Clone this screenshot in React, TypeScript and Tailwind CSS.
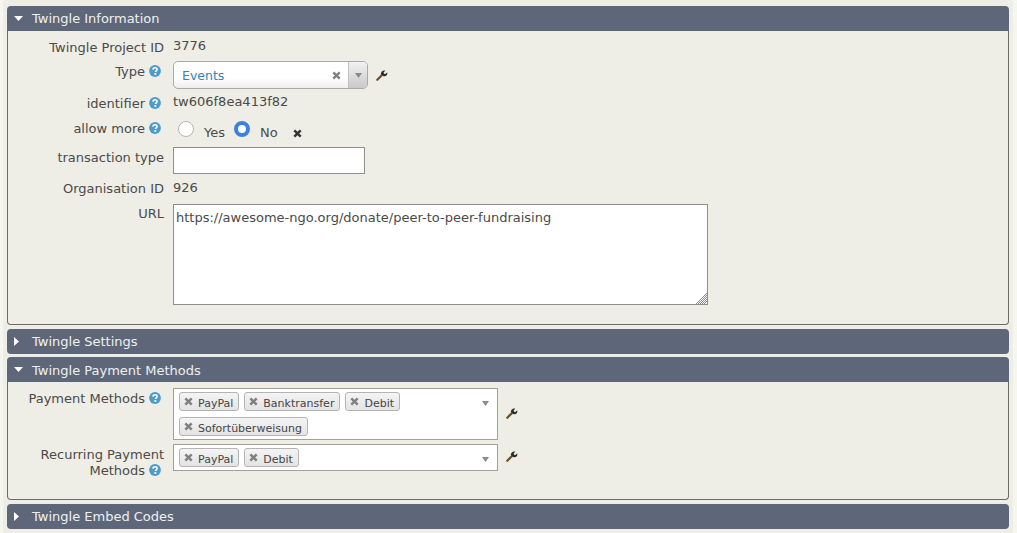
import React from "react";

const Help = () => (
  <svg width="12" height="12" viewBox="0 0 12 12" className="inline-block ml-[4px] mr-[3px] align-[-1px]">
    <circle cx="6" cy="6" r="5.9" fill="#4d9bcb" />
    <path d="M3.9 4.6C4 3.3 4.9 2.7 6 2.7c1.2 0 2.1.7 2.1 1.7 0 1.4-1.7 1.4-1.7 2.7" fill="none" stroke="#fff" strokeWidth="1.6" />
    <rect x="5.4" y="8" width="1.9" height="1.8" fill="#fff" />
  </svg>
);

const Wrench = () => (
  <svg width="12" height="12" viewBox="0 0 12 12" className="block">
    <path d="M1.3 10.7 L5.8 6.2" stroke="#6b5320" strokeWidth="2.3" strokeLinecap="round" />
    <path d="M4.8 5C4.8 2.6 7 .9 9.4 1.6L7.6 3.5l.5 1.2 1.3.4 1.9-1.8C11.8 6 10 7.7 7.7 7.2Z" fill="#2c2c2c" />
  </svg>
);

const X = ({ color = "#7f7f7f", size = 9 }: { color?: string; size?: number }) => (
  <svg width={size} height={size} viewBox="0 0 9 9" className="block shrink-0">
    <path d="M1.3 1.3 7.7 7.7M7.7 1.3 1.3 7.7" stroke={color} strokeWidth="2.4" />
  </svg>
);

const Caret = ({ open }: { open: boolean }) =>
  open ? (
    <svg width="9" height="5" viewBox="0 0 9 5" className="block"><path d="M0 0h9L4.5 5Z" fill="#fff" /></svg>
  ) : (
    <svg width="5" height="9" viewBox="0 0 5 9" className="block"><path d="M0 0v9L5 4.5Z" fill="#fff" /></svg>
  );

const Header = ({ title, open, low }: { title: string; open: boolean; low?: boolean }) => (
  <div className={`h-[25px] bg-[#5d6779] flex items-center text-[13px] ${open ? "rounded-t-[4px]" : "rounded-[4px]"}`}>
    <span className={`w-[25px] flex justify-center ${open ? "pr-[2px]" : "pr-[6px]"}`}><Caret open={open} /></span>
    <span className={`text-[#f0f0f0] ${low ? "pt-[2px]" : ""}`}>{title}</span>
  </div>
);

const Label = ({ children, help, flat }: { children: React.ReactNode; help?: boolean; flat?: boolean }) => (
  <div className={`w-[156px] shrink-0 text-right text-[#4a4a4a] leading-[18px] ${flat ? "" : "pt-[2px]"}`}>
    {children}
    {help && <Help />}
  </div>
);

const Token = ({ children }: { children: React.ReactNode }) => (
  <span className="h-[19px] inline-flex items-center gap-[5px] pl-[4px] pr-[5px] border border-[#b4b4b4] rounded-[3px] bg-gradient-to-b from-[#f4f4f4] to-[#e4e4e4] text-[11px] text-[#444444]">
    <X size={9} />
    <span className="leading-[13px] pt-[4px]">{children}</span>
  </span>
);

const Arrow = () => (
  <svg width="7" height="5" viewBox="0 0 7 5" className="block"><path d="M0 0h7L3.5 5Z" fill="#8c8c8c" /></svg>
);

export default function App() {
  return (
    <div className="min-h-[533px] w-[1017px] bg-[#f6f6f1] pl-[3px] pr-[4px] font-['DejaVu_Sans',sans-serif] text-[13px] text-[#4a4a4a] overflow-hidden">
      <div className="bg-[#eeeee6] h-[533px] pl-[4px] pr-[4px] pt-[6px]">
        <section>
          <Header title="Twingle Information" open />
          <div className="h-[294px] border border-t-0 border-[#6c6c64] rounded-b-[4px] pt-[6px]">
            <div className="flex h-[24px]">
              <Label>Twingle Project ID</Label>
              <div className="ml-[9px] leading-[16px] pt-[1px]">3776</div>
            </div>
            <div className="flex h-[28px] items-start">
              <Label help>Type</Label>
              <div className="ml-[9px] w-[195px] h-[28px] border border-[#a9a9a9] rounded-[5px] bg-gradient-to-b from-white from-60% to-[#eeeeee] flex overflow-hidden">
                <span className="flex-1 pl-[8px] leading-[27px] text-[#2b85c3] text-[12.5px]">Events</span>
                <span className="w-[19px] flex items-center justify-center pr-[4px]"><X size={9} /></span>
                <span className="w-[19px] border-l border-[#c0c0c0] bg-gradient-to-b from-[#f2f2f2] to-[#c9c9c9] flex items-center justify-center"><Arrow /></span>
              </div>
              <span className="ml-[8px] mt-[8px]"><Wrench /></span>
            </div>
            <div className="flex h-[27px] mt-[4px]">
              <Label help>identifier</Label>
              <div className="ml-[9px] leading-[16px] pt-[1px]">tw606f8ea413f82</div>
            </div>
            <div className="flex h-[27px] ">
              <Label help flat>allow more</Label>
              <div className="ml-[14px] flex items-start">
                <span className="w-[16px] h-[16px] rounded-full border border-[#b5b5b5] bg-white mt-[1px]" />
                <span className="ml-[10px] mt-[5px] leading-[16px]">Yes</span>
                <span className="ml-[9px] w-[16px] h-[16px] rounded-full border-[4px] border-[#3b82e0] bg-white mt-[1px]" />
                <span className="ml-[10px] mt-[5px] leading-[16px]">No</span>
                <span className="ml-[15px] mt-[9px]"><X color="#333" size={9} /></span>
              </div>
            </div>
            <div className="flex h-[27px]">
              <Label>transaction type</Label>
              <div className="ml-[9px] w-[192px] h-[27px] border border-[#8e8e8e] bg-white" />
            </div>
            <div className="flex h-[17px] mt-[4px]">
              <Label>Organisation ID</Label>
              <div className="ml-[9px] leading-[16px] pt-[2px]">926</div>
            </div>
            <div className="flex mt-[9px]">
              <div className="w-[156px] shrink-0 text-right text-[#4a4a4a] leading-[18px] pt-[1px]">URL</div>
              <div className="relative ml-[9px] w-[535px] h-[101px] border border-[#8e8e8e] bg-white pl-[2px] pt-[5px] leading-[16px]">
                https://awesome-ngo.org/donate/peer-to-peer-fundraising
                <svg width="11" height="11" viewBox="0 0 11 11" className="absolute right-0 bottom-0">
                  <path d="M0 11 11 0M2 11 11 2M4 11 11 4M6 11 11 6M8 11 11 8" stroke="#8a8a8a" strokeWidth="1" />
                </svg>
              </div>
            </div>
          </div>
        </section>
        <section className="mt-[4px]"><Header title="Twingle Settings" open={false} /></section>
        <section className="mt-[3px]">
          <Header title="Twingle Payment Methods" open low />
          <div className="h-[118px] border border-t-0 border-[#6c6c64] rounded-b-[4px] pt-[6px]">
            <div className="flex items-start">
              <Label help>Payment Methods</Label>
              <div className="ml-[9px] relative w-[325px] h-[52px] border border-[#a0a0a0] bg-white pl-[5px] pt-[3px]">
                <div className="flex flex-wrap gap-x-[5px] gap-y-[6px] w-[290px]">
                  <Token>PayPal</Token><Token>Banktransfer</Token><Token>Debit</Token><Token>Sofortüberweisung</Token>
                </div>
                <span className="absolute right-[8px] top-[12px]"><Arrow /></span>
              </div>
              <span className="ml-[8px] mt-[19px]"><Wrench /></span>
            </div>
            <div className="flex items-start mt-[4px]">
              <div className="w-[156px] shrink-0 text-right text-[#4a4a4a] leading-[16px] pt-[3px]">
                Recurring Payment<br />Methods<Help />
              </div>
              <div className="ml-[9px] relative w-[325px] h-[27px] border border-[#a0a0a0] bg-white pl-[5px] pt-[3px]">
                <div className="flex gap-[5px]"><Token>PayPal</Token><Token>Debit</Token></div>
                <span className="absolute right-[8px] top-[12px]"><Arrow /></span>
              </div>
              <span className="ml-[8px] mt-[6px]"><Wrench /></span>
            </div>
          </div>
        </section>
        <section className="mt-[4px]"><Header title="Twingle Embed Codes" open={false} /></section>
      </div>
    </div>
  );
}
